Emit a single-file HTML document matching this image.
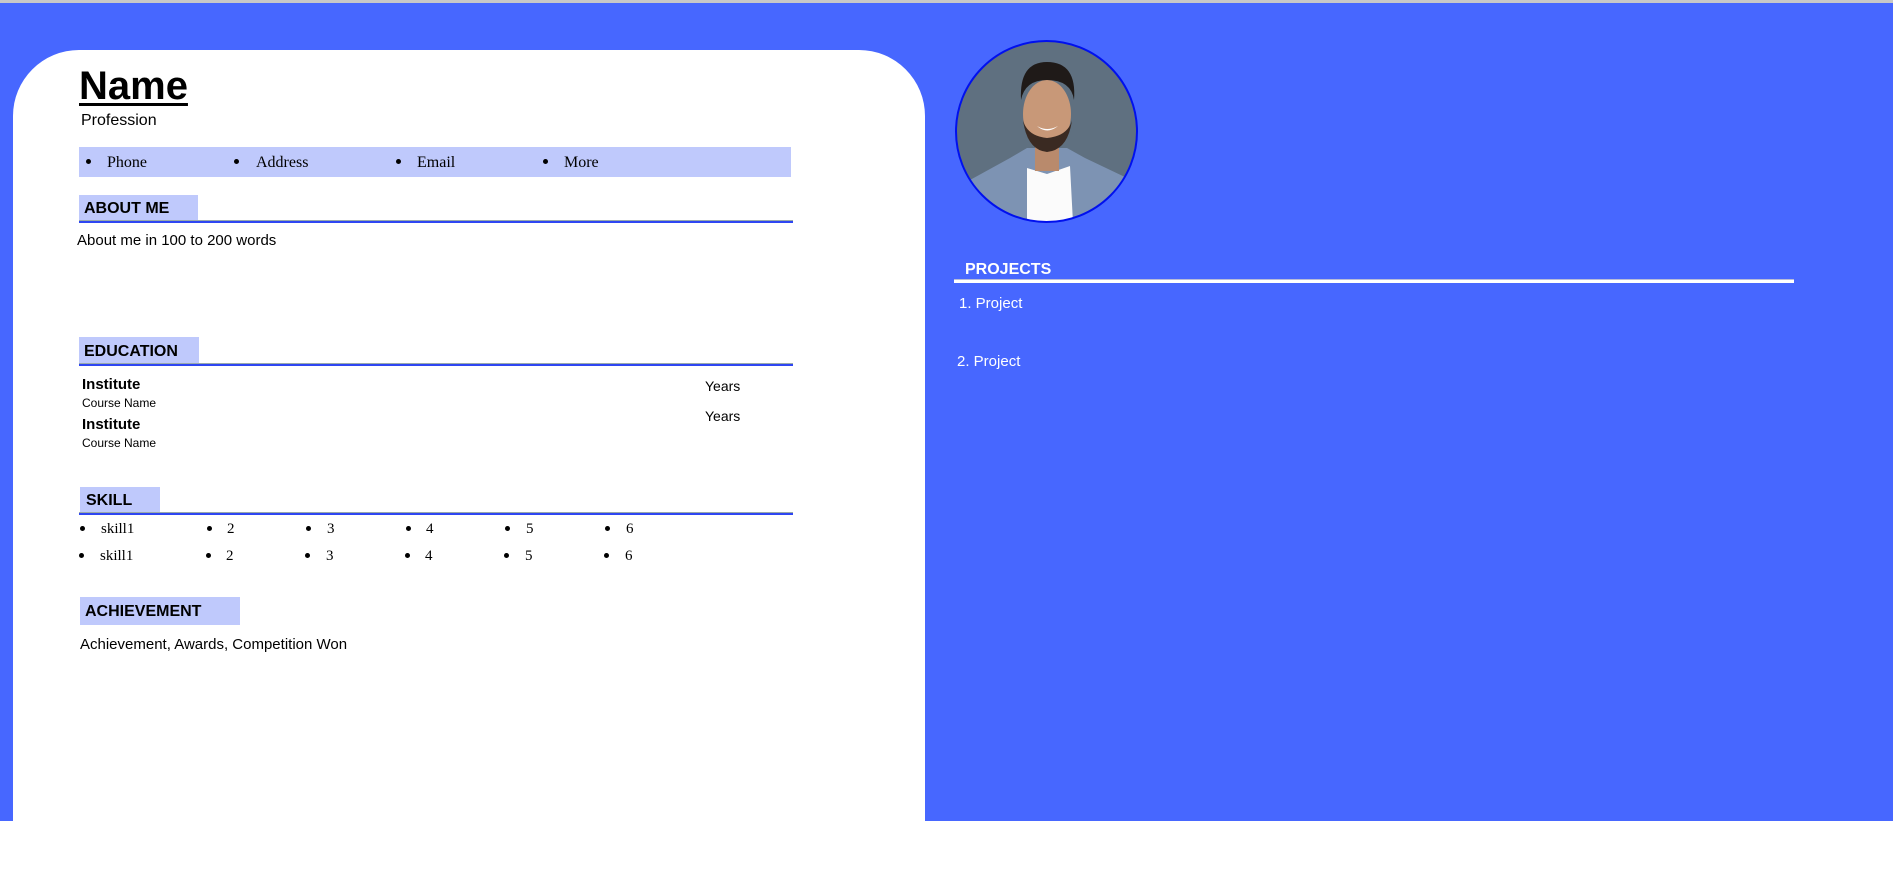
<!DOCTYPE html>
<html><head><meta charset="utf-8"><style>
*{margin:0;padding:0;box-sizing:border-box}
html,body{width:1893px;height:889px;background:#fff;overflow:hidden;font-family:"Liberation Sans",sans-serif}
.bg{position:absolute;left:0;top:3px;width:1893px;height:818px;background:#4767ff}
.topline{position:absolute;left:0;top:0;width:1893px;height:3px;background:#c8c8c8}
.card{position:absolute;left:13px;top:50px;width:912px;height:771px;background:#fff;border-radius:66px 66px 0 0}
.a{position:absolute;white-space:nowrap}
.serif{font-family:"Liberation Serif",serif}
.box{position:absolute;background:#bfc9fc}
.h{font-weight:bold;font-size:16px}
.line{position:absolute;height:3px;background:#2e46f2;border-top:1px solid #9aa}
.dot{position:absolute;width:5px;height:5px;border-radius:50%;background:#000}
</style></head><body>
<div class="topline"></div>
<div class="bg"></div>
<div class="card"></div>

<div class="a" style="left:79px;top:64px;font-size:40px;font-weight:bold;text-decoration:underline;text-decoration-thickness:3px;text-underline-offset:4px">Name</div>
<div class="a" style="left:81px;top:112px;font-size:16px">Profession</div>

<div class="box" style="left:79px;top:147px;width:712px;height:30px"></div>
<div class="dot" style="left:86px;top:159px"></div><div class="a serif" style="left:107px;top:154px;font-size:16px">Phone</div>
<div class="dot" style="left:234px;top:159px"></div><div class="a serif" style="left:256px;top:154px;font-size:16px">Address</div>
<div class="dot" style="left:396px;top:159px"></div><div class="a serif" style="left:417px;top:154px;font-size:16px">Email</div>
<div class="dot" style="left:543px;top:159px"></div><div class="a serif" style="left:564px;top:154px;font-size:16px">More</div>

<div class="box" style="left:79px;top:195px;width:119px;height:26px"></div>
<div class="a h" style="left:84px;top:200px">ABOUT ME</div>
<div class="line" style="left:79px;top:220px;width:714px"></div>
<div class="a" style="left:77px;top:232px;font-size:15px">About me in 100 to 200 words</div>

<div class="box" style="left:79px;top:337px;width:120px;height:27px"></div>
<div class="a h" style="left:84px;top:343px">EDUCATION</div>
<div class="line" style="left:79px;top:363px;width:714px"></div>
<div class="a" style="left:82px;top:376px;font-size:15px;font-weight:bold">Institute</div>
<div class="a" style="left:82px;top:396px;font-size:12px">Course Name</div>
<div class="a" style="left:82px;top:416px;font-size:15px;font-weight:bold">Institute</div>
<div class="a" style="left:82px;top:436px;font-size:12px">Course Name</div>
<div class="a" style="left:705px;top:378px;font-size:14px">Years</div>
<div class="a" style="left:705px;top:408px;font-size:14px">Years</div>

<div class="box" style="left:80px;top:487px;width:80px;height:26px"></div>
<div class="a h" style="left:86px;top:492px">SKILL</div>
<div class="line" style="left:79px;top:512px;width:714px"></div>

<div class="dot" style="left:80px;top:526px"></div><div class="a serif" style="left:101px;top:521px;font-size:15px">skill1</div>
<div class="dot" style="left:207px;top:526px"></div><div class="a serif" style="left:227px;top:521px;font-size:15px">2</div>
<div class="dot" style="left:306px;top:526px"></div><div class="a serif" style="left:327px;top:521px;font-size:15px">3</div>
<div class="dot" style="left:406px;top:526px"></div><div class="a serif" style="left:426px;top:521px;font-size:15px">4</div>
<div class="dot" style="left:505px;top:526px"></div><div class="a serif" style="left:526px;top:521px;font-size:15px">5</div>
<div class="dot" style="left:605px;top:526px"></div><div class="a serif" style="left:626px;top:521px;font-size:15px">6</div>
<div class="dot" style="left:79px;top:553px"></div><div class="a serif" style="left:100px;top:548px;font-size:15px">skill1</div>
<div class="dot" style="left:206px;top:553px"></div><div class="a serif" style="left:226px;top:548px;font-size:15px">2</div>
<div class="dot" style="left:305px;top:553px"></div><div class="a serif" style="left:326px;top:548px;font-size:15px">3</div>
<div class="dot" style="left:405px;top:553px"></div><div class="a serif" style="left:425px;top:548px;font-size:15px">4</div>
<div class="dot" style="left:504px;top:553px"></div><div class="a serif" style="left:525px;top:548px;font-size:15px">5</div>
<div class="dot" style="left:604px;top:553px"></div><div class="a serif" style="left:625px;top:548px;font-size:15px">6</div>

<div class="box" style="left:80px;top:597px;width:160px;height:28px"></div>
<div class="a h" style="left:85px;top:603px">ACHIEVEMENT</div>
<div class="a" style="left:80px;top:636px;font-size:15px">Achievement, Awards, Competition Won</div>

<svg style="position:absolute;left:955px;top:40px" width="183" height="183" viewBox="0 0 183 183">
<defs><clipPath id="c"><circle cx="91.5" cy="91.5" r="90"/></clipPath></defs>
<g clip-path="url(#c)">
<rect width="183" height="183" fill="#5f7080"/>
<path d="M15 140 L55 118 L72 108 L112 108 L130 118 L172 138 L183 183 L0 183 Z" fill="#7d93b3"/>
<path d="M72 128 L92 134 L115 126 L118 183 L72 183 Z" fill="#fbfbfb"/>
<rect x="80" y="95" width="24" height="36" fill="#b98a6c"/>
<ellipse cx="92" cy="74" rx="24" ry="34" fill="#c89878"/>
<path d="M68 80 Q72 110 92 112 Q113 110 117 80 Q113 96 92 98 Q72 96 68 80 Z" fill="#3a2a22"/>
<path d="M66 60 Q64 22 92 22 Q122 22 119 60 Q116 40 92 40 Q70 40 66 60 Z" fill="#1f1a18"/>
<path d="M82 86 Q92 92 103 86 Q92 95 82 86 Z" fill="#fff"/>
</g>
<circle cx="91.5" cy="91.5" r="90.5" fill="none" stroke="#0010ee" stroke-width="2"/>
</svg>

<div class="a h" style="left:965px;top:261px;color:#fff">PROJECTS</div>
<div class="a" style="left:954px;top:279px;width:840px;height:4px;background:#fff;border-top:1px solid #b8bcd8"></div>
<div class="a" style="left:959px;top:295px;font-size:15px;color:#fff">1. Project</div>
<div class="a" style="left:957px;top:353px;font-size:15px;color:#fff">2. Project</div>
</body></html>
